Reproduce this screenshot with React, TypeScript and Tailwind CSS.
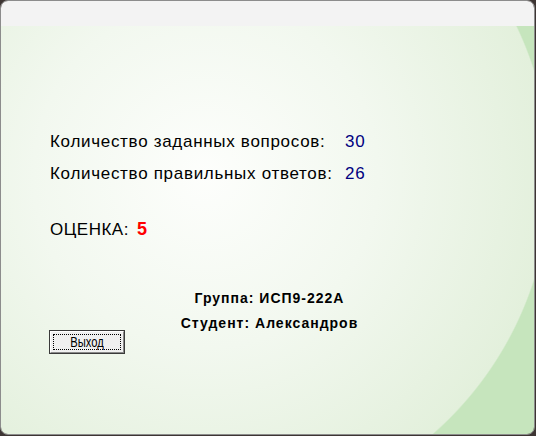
export default function App() {
  return (
    <div className="w-[536px] h-[436px] bg-[#3d3533] overflow-hidden">
      <div className="w-[535px] h-[435px] rounded-[8px] border border-[#8c8c8c] overflow-hidden flex flex-col font-['Liberation_Sans',Arial,sans-serif]">
        <div className="h-[25px] bg-[#f3f3f3] shrink-0" />
        <div className="flex-1 relative bg-[radial-gradient(circle_345px_at_205px_149px,#fdfefc_0%,#f2f8ef_50%,#e3f0dc_99.6%,#c6e5bd_100%)]">
          <div className="pl-[49px] pt-[107px]">
            <div className="grid grid-cols-[295px_auto] gap-y-[14px] text-[17px] leading-[18px] tracking-[0.7px] text-black">
              <span>Количество заданных вопросов:</span>
              <span className="text-[#000080]">30</span>
              <span>Количество правильных ответов:</span>
              <span className="text-[#000080]">26</span>
            </div>
            <div className="mt-[37px] flex items-baseline gap-[8px] text-[17px] leading-[18px] tracking-[0.5px]">
              <span>ОЦЕНКА:</span>
              <span className="text-[#ff0000] font-bold text-[18px] leading-[18px]">5</span>
            </div>
          </div>
          <div className="mt-[51px] flex flex-col items-center pl-[4px] text-[14px] leading-[16px] font-bold text-black gap-[9px] tracking-[1px]">
            <span>Группа: ИСП9-222А</span>
            <span>Студент: Александров</span>
          </div>
          <div className="pl-[48px] mt-[-1px]">
            <button className="w-[76px] h-[24px] border border-[#3a3a3a] bg-[#f0f0f0] p-0">
              <div className="h-full w-full border border-t-white border-l-white border-r-[#8a8a8a] border-b-[#8a8a8a] p-[2px]">
                <div className="h-full w-full border border-dotted border-black flex items-center justify-center text-black">
                  <span className="text-[14px] leading-none scale-x-[0.8] inline-block">Выход</span>
                </div>
              </div>
            </button>
          </div>
        </div>
      </div>
    </div>
  );
}
